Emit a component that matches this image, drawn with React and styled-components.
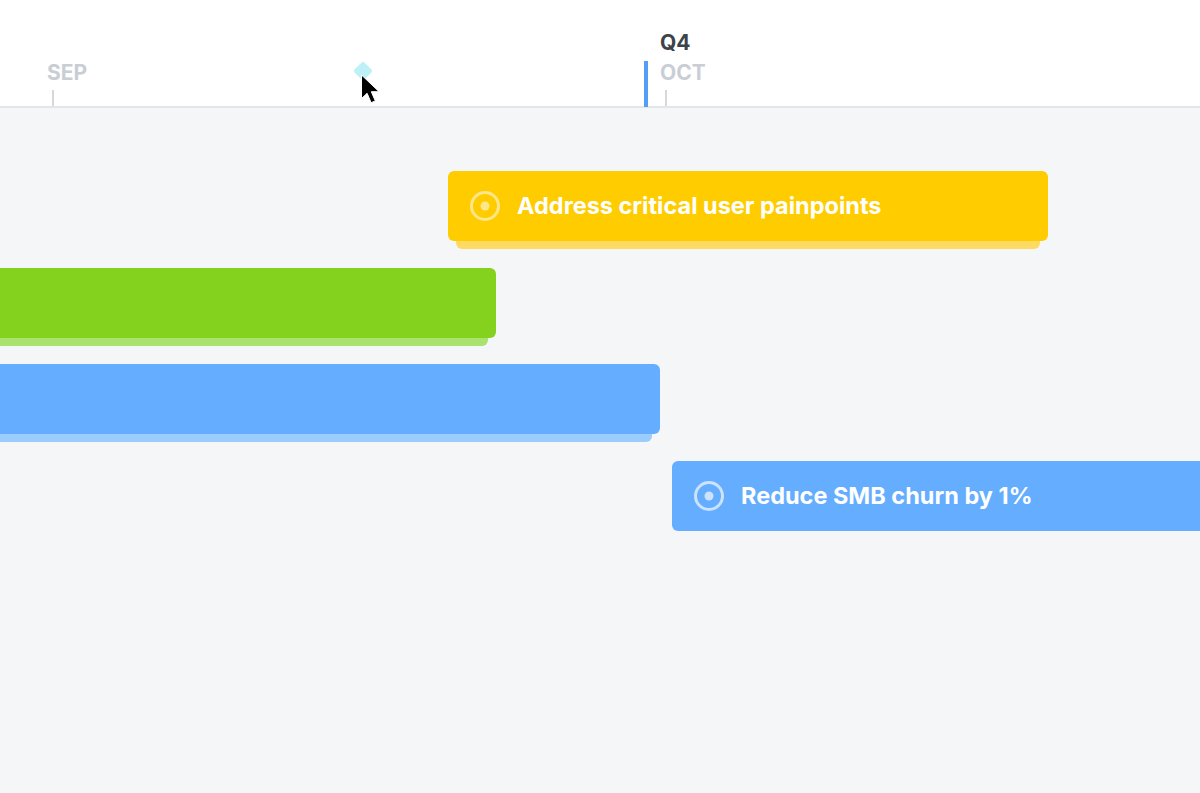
import React from 'react'
import styled, { createGlobalStyle } from 'styled-components'

const bars = [
  { id: 1, left: 448, width: 600, color: '#ffcc00', under: '#ffda63', ring: '#ffe68a', title: 'Address critical user painpoints' },
  { id: 2, left: -20, width: 516, color: '#84d21d', under: '#a9e26d' },
  { id: 3, left: -20, width: 680, color: '#64adff', under: '#9accfc' },
  { id: 4, left: 672, width: 560, color: '#64adff', under: 'transparent', ring: '#cbe3fe', title: 'Reduce SMB churn by 1%' },
]

function GoalIcon({ color }) {
  return (
    <svg width="32" height="32" viewBox="0 0 32 32" fill="none">
      <circle cx="16" cy="16" r="13.5" stroke={color} strokeWidth="3" />
      <circle cx="16" cy="16" r="4.5" fill={color} />
    </svg>
  )
}

function App() {
  return (
    <Page>
      <GlobalStyle />
      <Header>
        <Month $width={613}>
          <MonthName>SEP</MonthName>
          <Tick />
        </Month>
        <Month>
          <Quarter>Q4</Quarter>
          <MonthName>OCT</MonthName>
          <Tick />
        </Month>
        <TodayLine />
        <Milestone />
        <Cursor width="20" height="30" viewBox="0 0 20 30">
          <path d="M1.5 1v23.5l5.6-5.2 4 9.4 4.2-1.8-4-9.2h7.8z" fill="#000" stroke="#fff" strokeWidth="1" />
        </Cursor>
      </Header>
      <Board>
        {bars.map((bar) => (
          <Bar key={bar.id} $left={bar.left} $width={bar.width} $color={bar.color} $under={bar.under}>
            {bar.title && <GoalIcon color={bar.ring} />}
            {bar.title && <BarTitle>{bar.title}</BarTitle>}
          </Bar>
        ))}
      </Board>
    </Page>
  )
}

const GlobalStyle = createGlobalStyle`
  html, body {
    margin:0;
    padding:0;
    background:#f5f6f8;
  }
  body {
    font-family:"Inter","Liberation Sans",sans-serif;
    overflow:hidden;
  }
`
const Page = styled.div`
  width:1200px;
  height:793px;
  overflow:hidden;
  background:#f5f6f8;
`
const Header = styled.div`
  height:106px;
  padding-left:47px;
  background:#fff;
  border-bottom:2px solid #e3e5e8;
  margin-bottom:-1px;
  display:flex;
  align-items:flex-end;
  position:relative;
`
const Month = styled.div`
  width:${(p) => (p.$width ? `${p.$width}px` : 'auto')};
  display:flex;
  flex-direction:column;
  align-items:flex-start;
`
const Quarter = styled.div`
  font-size:21px;
  line-height:24px;
  font-weight:700;
  color:#3d4349;
  margin-bottom:6px;
`
const MonthName = styled.div`
  font-size:21px;
  line-height:24px;
  font-weight:700;
  color:#c9ced5;
`
const Tick = styled.div`
  width:2px;
  height:16px;
  margin:5px 0 0 5px;
  background:#d5d9de;
`
const TodayLine = styled.div`
  position:absolute;
  left:644px;
  top:61px;
  width:4px;
  height:46px;
  background:#549ff5;
`
const Milestone = styled.div`
  position:absolute;
  left:356px;
  top:64px;
  width:14px;
  height:14px;
  border-radius:2px;
  background:#bdf0f7;
  transform:rotate(45deg);
`
const Cursor = styled.svg`
  position:absolute;
  left:360px;
  top:74px;
`
const Board = styled.div`
  padding-top:64px;
  display:flex;
  flex-direction:column;
  gap:26.67px;
  isolation:isolate;
`
const Bar = styled.div`
  width:${(p) => p.$width}px;
  height:70px;
  margin-left:${(p) => p.$left}px;
  padding-left:21px;
  box-sizing:border-box;
  display:flex;
  align-items:center;
  gap:16px;
  flex-shrink:0;
  border-radius:6px;
  background:${(p) => p.$color};
  position:relative;
  &::after{
    content:'';
    position:absolute;
    left:8px;
    right:8px;
    bottom:-8px;
    height:16px;
    border-radius:0 0 6px 6px;
    background:${(p) => p.$under};
    z-index:-1;
  }
`
const BarTitle = styled.span`
  font-size:23.5px;
  line-height:30px;
  font-weight:700;
  color:#fff;
  white-space:nowrap;
`
export default App
